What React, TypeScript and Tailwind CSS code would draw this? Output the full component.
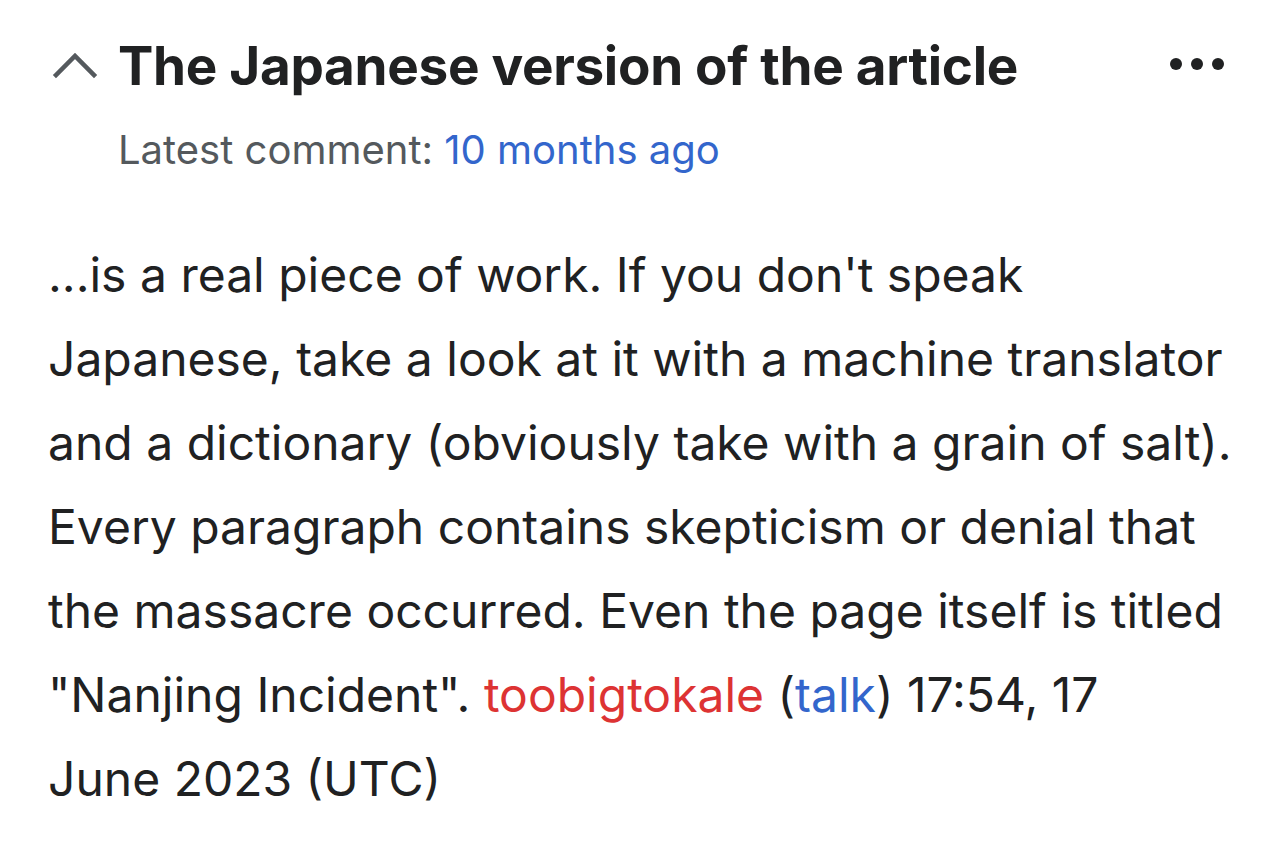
export default function App() {
  return (
    <div className="min-h-screen w-full bg-white text-[#202122]" style={{ fontFamily: 'Inter, "Noto Sans", sans-serif' }}>
      {/* Section header */}
      <div className="flex items-start pl-[52px] pr-[56px] pt-[36px]">
        <svg className="mt-[15px] h-[28px] w-[46px] shrink-0 text-[#54595d]" viewBox="0 0 46 28" fill="none" stroke="currentColor" strokeWidth="4.5" strokeLinecap="square">
          <path d="M4 24 L23 5 L42 24" />
        </svg>
        <div className="ml-[20px] flex-1">
          <h2 className="text-[53px] font-bold leading-[60px] tracking-[-0.3px]">The Japanese version of the article</h2>
          <p className="mt-[30px] text-[40px] leading-[48px] text-[#54595d]">
            Latest comment: <span className="text-[#3366cc]">10 months ago</span>
          </p>
        </div>
        <div className="mt-[22px] flex gap-[9px]">
          <span className="h-[12px] w-[12px] rounded-full bg-[#202122]" />
          <span className="h-[12px] w-[12px] rounded-full bg-[#202122]" />
          <span className="h-[12px] w-[12px] rounded-full bg-[#202122]" />
        </div>
      </div>

      {/* Comment body */}
      <p className="mt-[59px] pl-[48px] pr-[44px] text-[48px] leading-[84px]">
        ...is a real piece of work. If you don't speak Japanese, take a look at it with a machine translator and a dictionary (obviously take with a grain of salt). Every paragraph contains skepticism or denial that the massacre occurred. Even the page itself is titled "Nanjing Incident". <span className="text-[#d33]">toobigtokale</span> (<span className="text-[#3366cc]">talk</span>) 17:54, 17 June{'\u00a0'}2023 (UTC)
      </p>
    </div>
  );
}
